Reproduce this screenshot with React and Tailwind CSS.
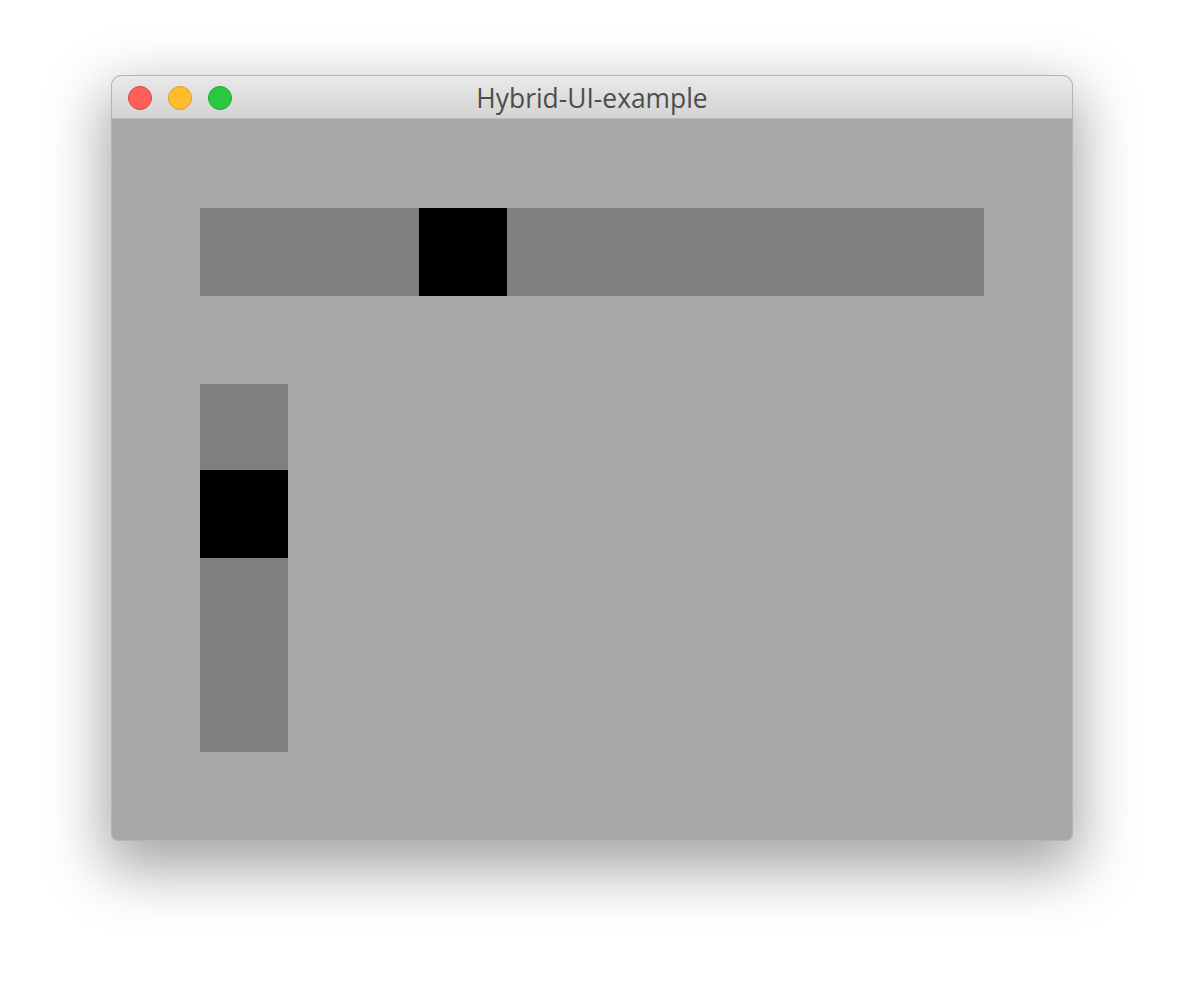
export default function App() {
  return (
    <div className="w-[1184px] h-[988px] bg-white overflow-hidden pt-[75px] pl-[111px]">
      <div className="w-[962px] h-[766px] rounded-t-[10px] rounded-b-[7px] border border-[#b4b4b4] shadow-[0_22px_60px_6px_rgba(0,0,0,0.36)] overflow-hidden flex flex-col bg-[#a9a9a9]">
        <div className="relative h-[43px] shrink-0 bg-gradient-to-b from-[#e9e9e9] to-[#d4d4d4] border-b border-[#b9b9b9] flex items-center">
          <div className="flex items-center gap-[16px] pl-[16px] pt-[1px]">
            <div className="w-[24px] h-[24px] rounded-full bg-[#ff5f57] border border-[#e0443e]" />
            <div className="w-[24px] h-[24px] rounded-full bg-[#febc2e] border border-[#dea123]" />
            <div className="w-[24px] h-[24px] rounded-full bg-[#28c840] border border-[#1aab29]" />
          </div>
          <div className="absolute inset-0 flex items-center justify-center pt-[3px] text-[26.4px] text-[#4d4d4d] font-['Open_Sans','Liberation_Sans',sans-serif]">
            Hybrid-UI-example
          </div>
        </div>
        <div className="flex-1 pl-[88px] pt-[89px] flex flex-col">
          <div className="w-[784px] h-[88px] flex bg-[#808080]">
            <div className="w-[219px]" />
            <div className="w-[88px] h-[88px] bg-black" />
          </div>
          <div className="mt-[88px] w-[88px] h-[368px] flex flex-col bg-[#808080]">
            <div className="h-[86px]" />
            <div className="w-[88px] h-[88px] bg-black" />
          </div>
        </div>
      </div>
    </div>
  );
}
